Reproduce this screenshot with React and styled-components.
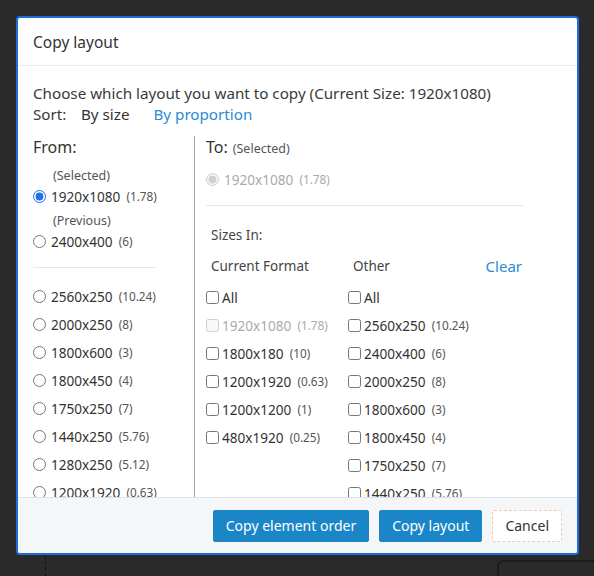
import React from "react"
import styled, { createGlobalStyle } from "styled-components"

const GlobalStyle = createGlobalStyle`
  html, body {
    margin: 0;
    padding: 0;
    background: #2a2a2a;
  }
  body {
    font-family: "Noto Sans", "Open Sans", sans-serif;
    color: #333;
  }
  * {
    box-sizing: border-box;
  }
`

const Backdrop = styled.div`
  position: relative;
  width: 594px;
  height: 576px;
  padding: 16px 0 0 16px;
  overflow: hidden;
`

const Guide = styled.div`
  position: absolute;
  left: 45px;
  top: 556px;
  height: 20px;
  border-left: 1px dashed #111;
`

const GhostPanel = styled.div`
  position: absolute;
  left: 497px;
  top: 560px;
  width: 120px;
  height: 60px;
  border: 2px solid #1c1c1c;
  border-radius: 6px;
`

const Dialog = styled.div`
  position: relative;
  width: 563px;
  height: 539px;
  background: #fff;
  border: 2px solid #1b6fdc;
  border-radius: 4px;
  display: flex;
  flex-direction: column;
  overflow: hidden;
`

const Header = styled.div`
  height: 48px;
  flex: none;
  display: flex;
  align-items: center;
  padding: 0 15px;
  border-bottom: 1px solid #e8ecf1;
  font-size: 15.5px;
  color: #333;
`

const Body = styled.div`
  flex: 1;
  overflow: hidden;
  padding: 17px 15px 0;
`

const Line = styled.div`
  font-size: 15.2px;
  line-height: 21px;
  color: #3a3a3a;
  display: flex;
  white-space: nowrap;
`

const SortLabel = styled.span`
  width: 48px;
`

const SortOption = styled.span`
  margin-right: ${(p) => p.$gap || 0}px;
  color: ${(p) => (p.$link ? "#2b8bd6" : "#333")};
`

const Columns = styled.div`
  display: flex;
  margin-top: 11px;
`

const FromColumn = styled.div`
  width: 162px;
  flex: none;
  border-right: 1px solid #a6a6a6;
  padding-right: 40px;
  min-height: 400px;
`

const ToColumn = styled.div`
  flex: none;
  width: 329px;
  padding-left: 11px;
`

const Heading = styled.div`
  font-size: 16px;
  line-height: 22px;
  color: #333;
  display: flex;
  align-items: baseline;
  gap: 5px;
`

const Note = styled.span`
  display: block;
  font-size: 12.5px;
  line-height: 18px;
  color: #555;
  padding-left: ${(p) => p.$indent || 0}px;
  margin-top: ${(p) => p.$top || 0}px;
`

const Option = styled.label`
  display: flex;
  align-items: center;
  height: ${(p) => p.$h || 28}px;
  margin-top: ${(p) => p.$top || 0}px;
  font-size: 13.6px;
  white-space: nowrap;
  color: ${(p) => (p.$disabled ? "#aaa" : "#333")};
`

const Radio = styled.input.attrs({ type: "radio" })`
  width: 13px;
  height: 13px;
  margin: 0 5px 0 0;
  accent-color: #1a73e8;
`

const Check = styled.input.attrs({ type: "checkbox" })`
  width: 13px;
  height: 13px;
  margin: 0 3px 0 0;
`

const Ratio = styled.span`
  font-size: 11.8px;
  margin-left: 6px;
  color: ${(p) => (p.$disabled ? "#aaa" : "#555")};
`

const Rule = styled.div`
  height: 1px;
  background: #e6e6e6;
  width: ${(p) => p.$w}px;
  margin: ${(p) => p.$top}px 0 ${(p) => p.$bottom}px;
`

const SubLabel = styled.div`
  font-size: 13.5px;
  line-height: 20px;
  color: #444;
  padding-left: 5px;
  margin-top: ${(p) => p.$top || 0}px;
`

const FormatHead = styled.div`
  display: grid;
  grid-template-columns: 142px 1fr auto;
  width: 317px;
  align-items: center;
  height: 20px;
  margin-top: 11px;
  font-size: 13.5px;
  color: #444;
`

const FormatTitle = styled.span`
  padding-left: 5px;
`

const ClearLink = styled.span`
  font-size: 15px;
  color: #2b8bd6;
  padding-right: 1px;
`

const FormatGrid = styled.div`
  display: grid;
  grid-template-columns: 142px 1fr;
  margin-top: 7px;
`

const Footer = styled.div`
  height: 56px;
  flex: none;
  background: #f5f6f8;
  border-top: 1px solid #dde2e8;
  display: flex;
  justify-content: flex-end;
  align-items: center;
  gap: 10px;
  padding: 0 15px 0 0;
`

const Button = styled.button`
  height: 32px;
  padding: 0 12px;
  border-radius: 2px;
  font-family: inherit;
  font-size: 14px;
  cursor: pointer;
  border: ${(p) => (p.$primary ? "1px solid #1a86c8" : "1px dashed #e7cbbd")};
  background: ${(p) => (p.$primary ? "#1a86c8" : "#fff")};
  color: ${(p) => (p.$primary ? "#fff" : "#333")};
`

const fromList = [
  ["2560x250", "10.24"],
  ["2000x250", "8"],
  ["1800x600", "3"],
  ["1800x450", "4"],
  ["1750x250", "7"],
  ["1440x250", "5.76"],
  ["1280x250", "5.12"],
  ["1200x1920", "0.63"],
]

const currentFormat = [
  ["1920x1080", "1.78", true],
  ["1800x180", "10"],
  ["1200x1920", "0.63"],
  ["1200x1200", "1"],
  ["480x1920", "0.25"],
]

const otherFormat = [
  ["2560x250", "10.24"],
  ["2400x400", "6"],
  ["2000x250", "8"],
  ["1800x600", "3"],
  ["1800x450", "4"],
  ["1750x250", "7"],
  ["1440x250", "5.76"],
]

const CheckItem = ({ size, ratio, disabled }) => (
  <Option $disabled={disabled}>
    <Check disabled={disabled} />
    {size}
    <Ratio $disabled={disabled}>({ratio})</Ratio>
  </Option>
)

export default function App() {
  return (
    <Backdrop>
      <GlobalStyle />
      <Guide />
      <GhostPanel />
      <Dialog>
        <Header>Copy layout</Header>
        <Body>
          <Line>Choose which layout you want to copy (Current Size: 1920x1080)</Line>
          <Line>
            <SortLabel>Sort:</SortLabel>
            <SortOption $gap={24}>By size</SortOption>
            <SortOption $link>By proportion</SortOption>
          </Line>
          <Columns>
            <FromColumn>
              <Heading>From:</Heading>
              <Note $indent={20} $top={9}>(Selected)</Note>
              <Option $h={22}>
                <Radio name="from" defaultChecked />
                1920x1080<Ratio>(1.78)</Ratio>
              </Option>
              <Note $indent={20} $top={5}>(Previous)</Note>
              <Option $h={22}>
                <Radio name="from" />
                2400x400<Ratio>(6)</Ratio>
              </Option>
              <Rule $w={122} $top={15} $bottom={14} />
              {fromList.map(([size, ratio]) => (
                <Option key={size}>
                  <Radio name="from" />
                  {size}
                  <Ratio>({ratio})</Ratio>
                </Option>
              ))}
            </FromColumn>
            <ToColumn>
              <Heading>
                To:<Note as="span">(Selected)</Note>
              </Heading>
              <Option $h={22} $top={10} $disabled>
                <Radio name="to" defaultChecked disabled />
                1920x1080<Ratio $disabled>(1.78)</Ratio>
              </Option>
              <Rule $w={317} $top={15} $bottom={0} />
              <SubLabel $top={19}>Sizes In:</SubLabel>
              <FormatHead>
                <FormatTitle>Current Format</FormatTitle>
                <FormatTitle>Other</FormatTitle>
                <ClearLink>Clear</ClearLink>
              </FormatHead>
              <FormatGrid>
                <div>
                  <Option>
                    <Check />
                    All
                  </Option>
                  {currentFormat.map(([size, ratio, disabled]) => (
                    <CheckItem key={size} size={size} ratio={ratio} disabled={disabled} />
                  ))}
                </div>
                <div>
                  <Option>
                    <Check />
                    All
                  </Option>
                  {otherFormat.map(([size, ratio]) => (
                    <CheckItem key={size} size={size} ratio={ratio} />
                  ))}
                </div>
              </FormatGrid>
            </ToColumn>
          </Columns>
        </Body>
        <Footer>
          <Button $primary>Copy element order</Button>
          <Button $primary>Copy layout</Button>
          <Button>Cancel</Button>
        </Footer>
      </Dialog>
    </Backdrop>
  )
}
